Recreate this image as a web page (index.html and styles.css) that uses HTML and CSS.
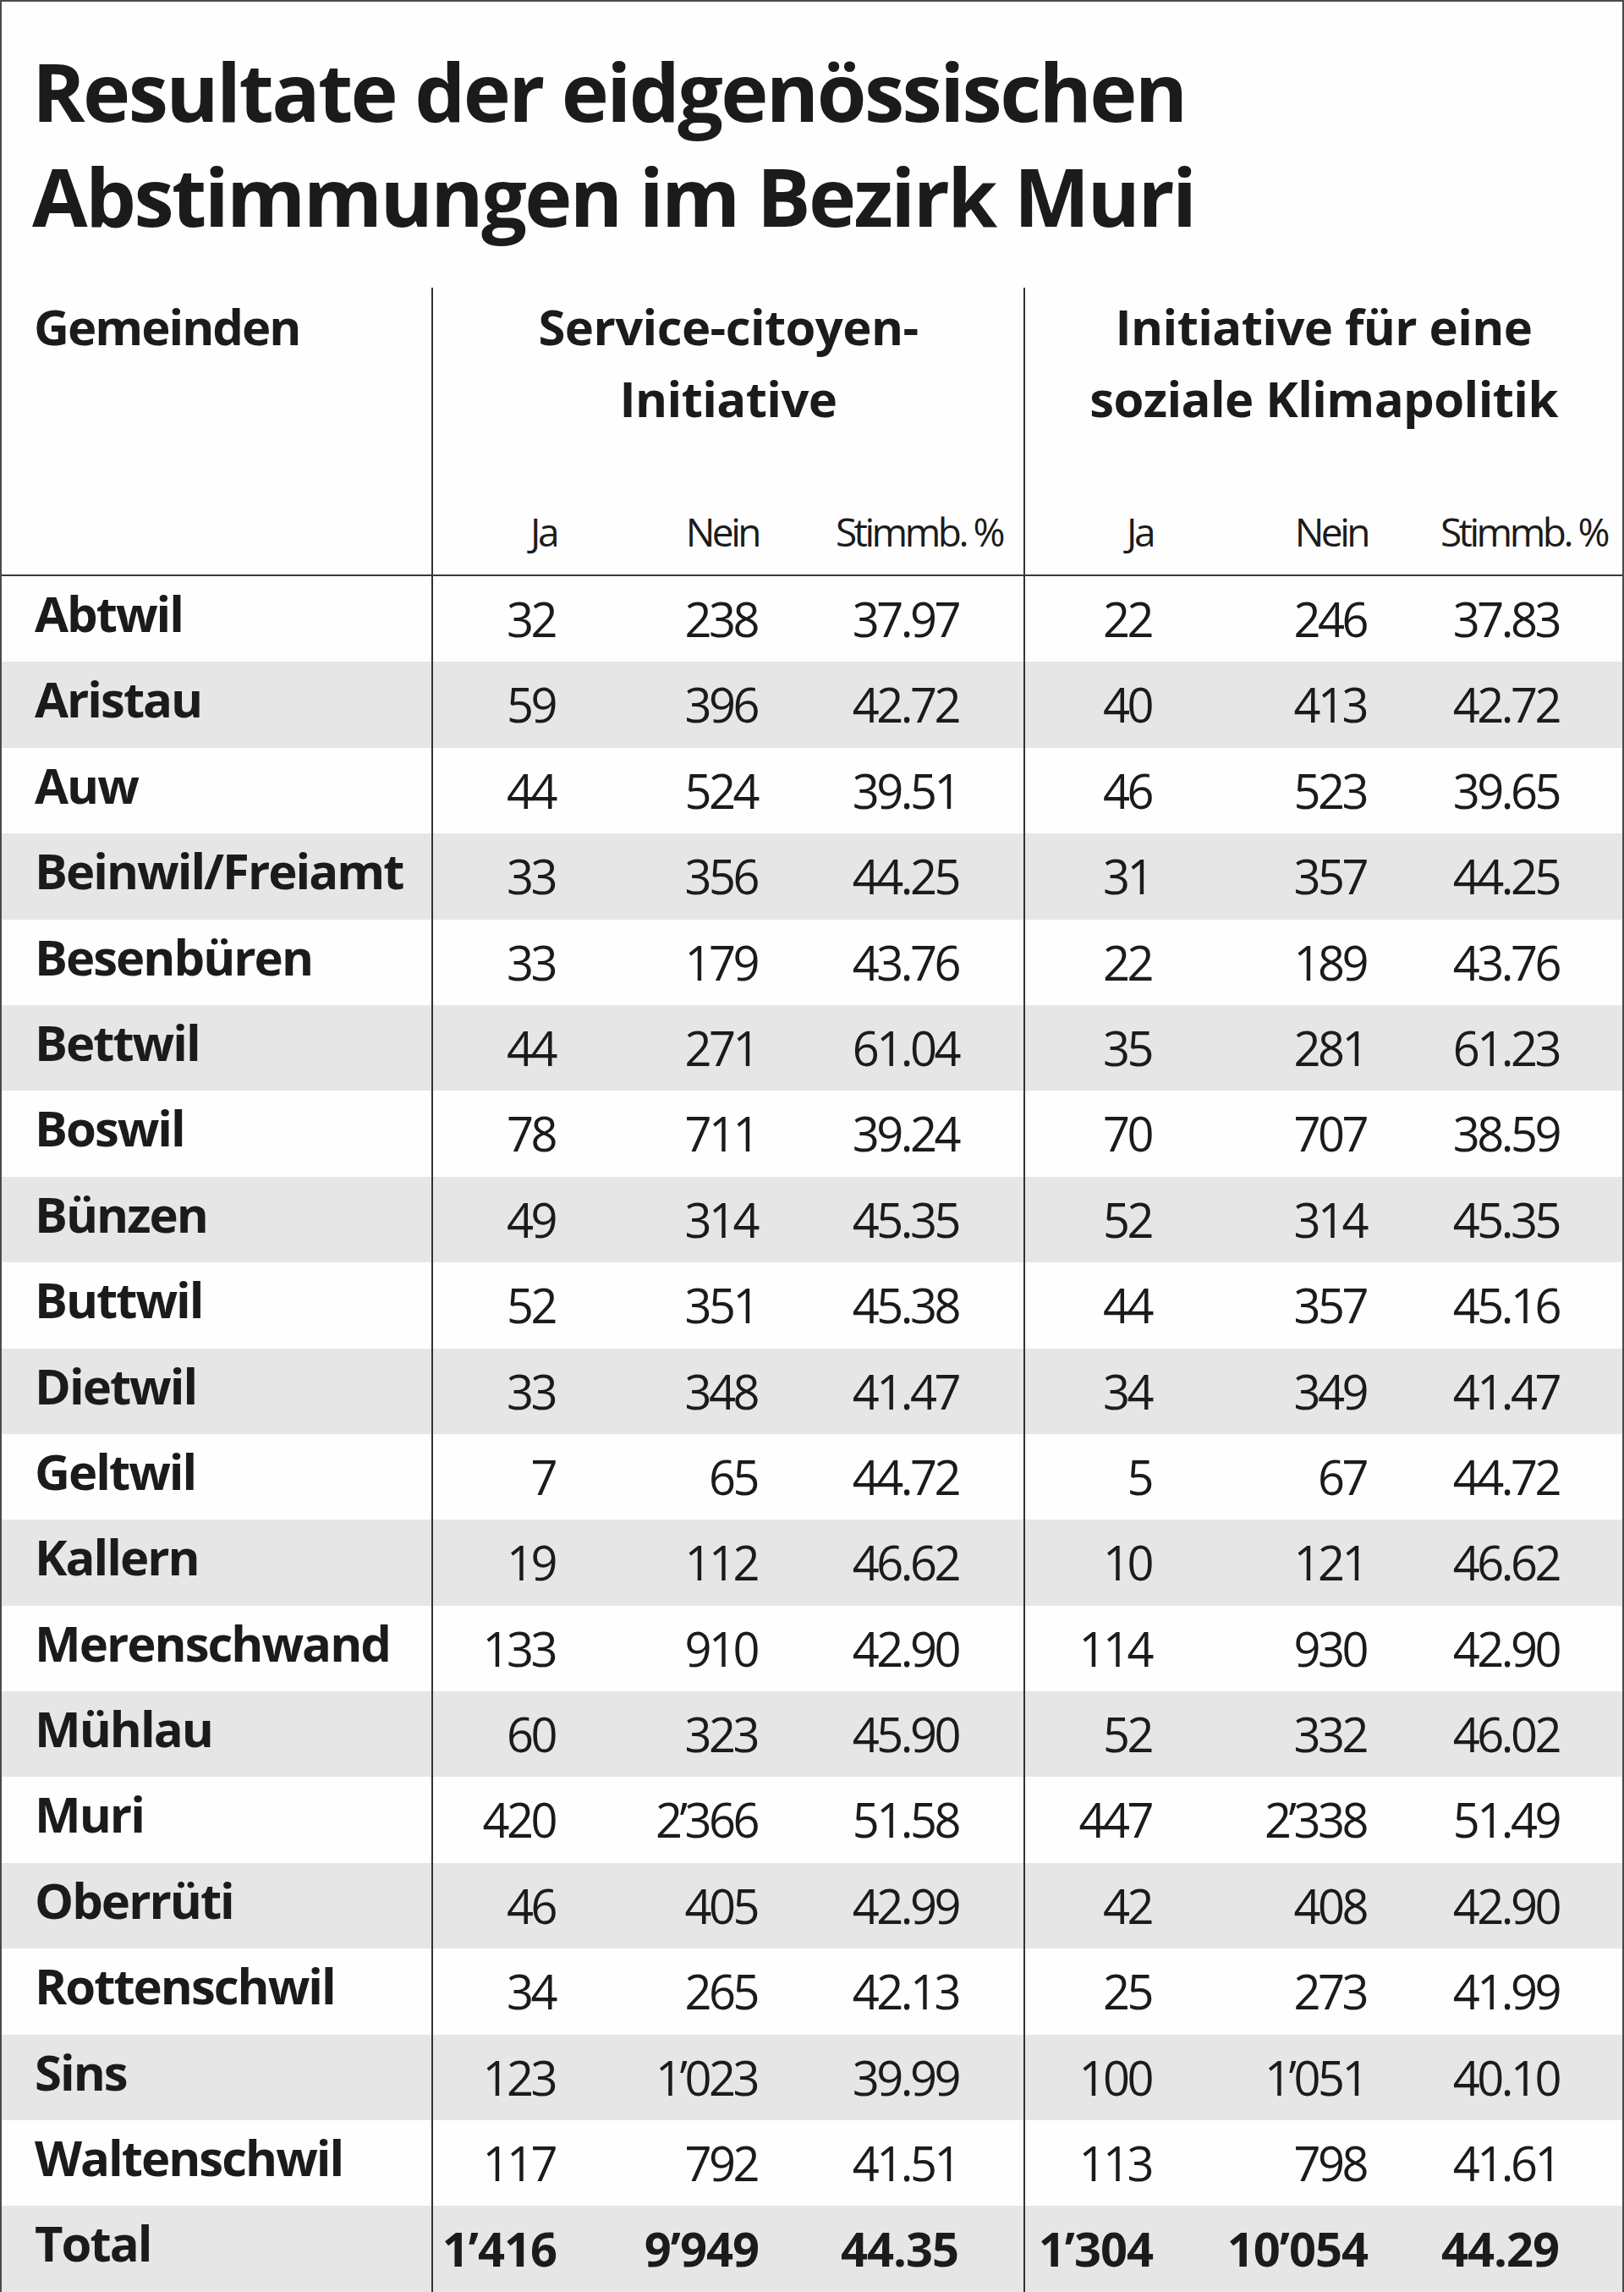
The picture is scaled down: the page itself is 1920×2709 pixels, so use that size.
FILE: index.html
```html
<!DOCTYPE html>
<html lang="de">
<head>
<meta charset="utf-8">
<title>Resultate der eidgenössischen Abstimmungen im Bezirk Muri</title>
<link rel="stylesheet" href="styles.css">
</head>
<body>
<div class="sheet">
  <h1 class="title">Resultate der eidgenössischen<br>Abstimmungen im Bezirk Muri</h1>

  <div class="head">
    <div class="head-name">Gemeinden</div>
    <div class="grp grp1 head-grp">
      <div class="gtitle">Service-citoyen-<br>Initiative</div>
      <div class="sub">Ja</div><div class="sub">Nein</div><div class="sub st">Stimmb. %</div>
    </div>
    <div class="grp grp2 head-grp">
      <div class="gtitle">Initiative für eine<br>soziale Klimapolitik</div>
      <div class="sub">Ja</div><div class="sub">Nein</div><div class="sub st">Stimmb. %</div>
    </div>
  </div>

  <div class="row"><div class="name">Abtwil</div><div class="grp grp1"><span>32</span><span>238</span><span class="st">37.97</span></div><div class="grp grp2"><span>22</span><span>246</span><span class="st">37.83</span></div></div>
  <div class="row alt"><div class="name">Aristau</div><div class="grp grp1"><span>59</span><span>396</span><span class="st">42.72</span></div><div class="grp grp2"><span>40</span><span>413</span><span class="st">42.72</span></div></div>
  <div class="row"><div class="name">Auw</div><div class="grp grp1"><span>44</span><span>524</span><span class="st">39.51</span></div><div class="grp grp2"><span>46</span><span>523</span><span class="st">39.65</span></div></div>
  <div class="row alt"><div class="name">Beinwil/Freiamt</div><div class="grp grp1"><span>33</span><span>356</span><span class="st">44.25</span></div><div class="grp grp2"><span>31</span><span>357</span><span class="st">44.25</span></div></div>
  <div class="row"><div class="name">Besenbüren</div><div class="grp grp1"><span>33</span><span>179</span><span class="st">43.76</span></div><div class="grp grp2"><span>22</span><span>189</span><span class="st">43.76</span></div></div>
  <div class="row alt"><div class="name">Bettwil</div><div class="grp grp1"><span>44</span><span>271</span><span class="st">61.04</span></div><div class="grp grp2"><span>35</span><span>281</span><span class="st">61.23</span></div></div>
  <div class="row"><div class="name">Boswil</div><div class="grp grp1"><span>78</span><span>711</span><span class="st">39.24</span></div><div class="grp grp2"><span>70</span><span>707</span><span class="st">38.59</span></div></div>
  <div class="row alt"><div class="name">Bünzen</div><div class="grp grp1"><span>49</span><span>314</span><span class="st">45.35</span></div><div class="grp grp2"><span>52</span><span>314</span><span class="st">45.35</span></div></div>
  <div class="row"><div class="name">Buttwil</div><div class="grp grp1"><span>52</span><span>351</span><span class="st">45.38</span></div><div class="grp grp2"><span>44</span><span>357</span><span class="st">45.16</span></div></div>
  <div class="row alt"><div class="name">Dietwil</div><div class="grp grp1"><span>33</span><span>348</span><span class="st">41.47</span></div><div class="grp grp2"><span>34</span><span>349</span><span class="st">41.47</span></div></div>
  <div class="row"><div class="name">Geltwil</div><div class="grp grp1"><span>7</span><span>65</span><span class="st">44.72</span></div><div class="grp grp2"><span>5</span><span>67</span><span class="st">44.72</span></div></div>
  <div class="row alt"><div class="name">Kallern</div><div class="grp grp1"><span>19</span><span>112</span><span class="st">46.62</span></div><div class="grp grp2"><span>10</span><span>121</span><span class="st">46.62</span></div></div>
  <div class="row"><div class="name">Merenschwand</div><div class="grp grp1"><span>133</span><span>910</span><span class="st">42.90</span></div><div class="grp grp2"><span>114</span><span>930</span><span class="st">42.90</span></div></div>
  <div class="row alt"><div class="name">Mühlau</div><div class="grp grp1"><span>60</span><span>323</span><span class="st">45.90</span></div><div class="grp grp2"><span>52</span><span>332</span><span class="st">46.02</span></div></div>
  <div class="row"><div class="name">Muri</div><div class="grp grp1"><span>420</span><span>2’366</span><span class="st">51.58</span></div><div class="grp grp2"><span>447</span><span>2’338</span><span class="st">51.49</span></div></div>
  <div class="row alt"><div class="name">Oberrüti</div><div class="grp grp1"><span>46</span><span>405</span><span class="st">42.99</span></div><div class="grp grp2"><span>42</span><span>408</span><span class="st">42.90</span></div></div>
  <div class="row"><div class="name">Rottenschwil</div><div class="grp grp1"><span>34</span><span>265</span><span class="st">42.13</span></div><div class="grp grp2"><span>25</span><span>273</span><span class="st">41.99</span></div></div>
  <div class="row alt"><div class="name">Sins</div><div class="grp grp1"><span>123</span><span>1’023</span><span class="st">39.99</span></div><div class="grp grp2"><span>100</span><span>1’051</span><span class="st">40.10</span></div></div>
  <div class="row"><div class="name">Waltenschwil</div><div class="grp grp1"><span>117</span><span>792</span><span class="st">41.51</span></div><div class="grp grp2"><span>113</span><span>798</span><span class="st">41.61</span></div></div>
  <div class="row alt total"><div class="name">Total</div><div class="grp grp1"><span>1’416</span><span>9’949</span><span class="st">44.35</span></div><div class="grp grp2"><span>1’304</span><span>10’054</span><span class="st">44.29</span></div></div>
</div>
</body>
</html>
```

FILE: styles.css
```css
html, body {
  margin: 0;
  padding: 0;
  background: #ffffff;
}

body {
  color: #1c1b1b;
  font-family: "Open Sans", "Noto Sans", "Liberation Sans", sans-serif;
}

.sheet {
  width: 1920px;
  height: 2709px;
  box-sizing: border-box;
  border-top: 2px solid #4a4a4a;
  border-left: 2px solid #4a4a4a;
  border-right: 2px solid #4a4a4a;
  overflow: hidden;
  background: #fefefe;
}

.title {
  margin: 0;
  height: 338px;
  box-sizing: border-box;
  padding: 43px 0 0 36px;
  font-size: 95px;
  line-height: 124px;
  font-weight: 700;
  letter-spacing: -2.6px;
}

/* header */
.head {
  display: grid;
  grid-template-columns: 508px 700px 708px;
  height: 341px;
  box-sizing: border-box;
  border-bottom: 2px solid #3a3a3a;
}

.head-name {
  padding: 3px 0 0 38px;
  font-size: 58px;
  line-height: 85px;
  font-weight: 700;
  letter-spacing: -2px;
}

.grp {
  display: grid;
  border-left: 2px solid #333333;
}

.grp1 {
  grid-template-columns: 146px 239px 313px;
}

.grp2 {
  grid-template-columns: 151px 254px 301px;
}

.head-grp {
  grid-template-rows: 240px 99px;
}

.gtitle {
  grid-column: 1 / -1;
  padding-top: 3px;
  text-align: center;
  font-size: 58px;
  line-height: 85px;
  font-weight: 700;
  letter-spacing: -0.6px;
}

.sub {
  padding-top: 18px;
  text-align: right;
  font-size: 46px;
  line-height: 60px;
  font-weight: 400;
  letter-spacing: -3.5px;
}

.grp1 .sub.st {
  padding-right: 25px;
}

.grp2 .sub.st {
  padding-right: 18px;
}

/* data rows */
.row {
  display: grid;
  grid-template-columns: 508px 700px 708px;
  height: 101.4px;
}

.row.alt {
  background: #e6e6e6;
}

.name {
  padding: 4px 0 0 39px;
  font-size: 58px;
  line-height: 80px;
  font-weight: 700;
  letter-spacing: -2px;
  white-space: nowrap;
}

.row .grp span {
  display: block;
  padding-top: 10px;
  padding-right: 2px;
  text-align: right;
  font-size: 56px;
  line-height: 80px;
  font-weight: 400;
  letter-spacing: -3.5px;
  white-space: nowrap;
}

.row .grp1 span.st {
  padding-right: 77px;
}

.row .grp2 span.st {
  padding-right: 75px;
}

.total .grp span {
  font-weight: 700;
  letter-spacing: -1px;
  padding-right: 0;
}

.total .grp1 span.st {
  padding-right: 77px;
}

.total .grp2 span.st {
  padding-right: 75px;
}
```
